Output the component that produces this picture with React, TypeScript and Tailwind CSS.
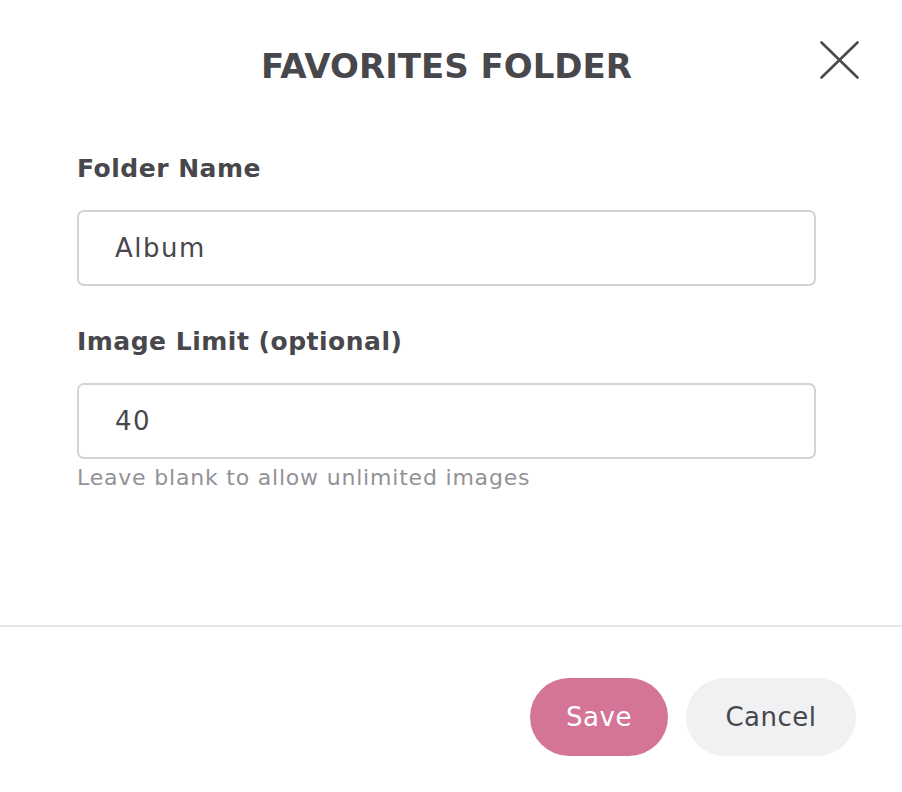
import { useState } from "react";

const font = "font-['DejaVu_Sans',sans-serif]";

const Field = ({
  label,
  value,
  onChange,
  hint,
}: {
  label: string;
  value: string;
  onChange: (v: string) => void;
  hint?: string;
}) => (
  <div className="flex flex-col">
    <label className="text-[25px] leading-[30px] font-bold text-[#47474c] tracking-[0.5px]">{label}</label>
    <input
      value={value}
      onChange={(e) => onChange(e.target.value)}
      className="mt-[26px] h-[76px] w-[739px] rounded-[7px] border-2 border-[#d4d4d6] px-[36px] text-[26px] tracking-[1.5px] text-[#47474c] outline-none"
    />
    {hint && <p className="mt-[6px] text-[22px] leading-[26px] tracking-[0.8px] text-[#929296]">{hint}</p>}
  </div>
);

export default function App() {
  const [name, setName] = useState("Album");
  const [limit, setLimit] = useState("40");

  return (
    <div className={`w-[902px] h-[792px] bg-white flex flex-col ${font}`}>
      {/* header */}
      <div className="grid grid-cols-[1fr_auto_1fr] items-start pt-[41px] pl-[34px] pr-[43px]">
        <div />
        <h1 className="pt-[5px] text-[34px] leading-[40px] font-extrabold text-[#47474c]">FAVORITES FOLDER</h1>
        <div className="flex justify-end">
          <button className="w-[39px] h-[38px] text-[#4a4a4f]">
            <svg viewBox="0 0 39 38" className="w-[39px] h-[38px]" fill="none" stroke="currentColor" strokeWidth="2.6" strokeLinecap="round">
              <path d="M1.5 1.5 L37.5 36.5 M37.5 1.5 L1.5 36.5" />
            </svg>
          </button>
        </div>
      </div>

      {/* body */}
      <div className="flex flex-col gap-[41px] pl-[77px] pt-[68px]">
        <Field label="Folder Name" value={name} onChange={setName} />
        <Field label="Image Limit (optional)" value={limit} onChange={setLimit} hint="Leave blank to allow unlimited images" />
      </div>

      <div className="flex-1" />

      {/* footer */}
      <div className="border-t-2 border-[#e6e6e8] flex justify-end gap-[18px] pt-[51px] pb-[36px] pr-[46px]">
        <button className="h-[78px] w-[138px] rounded-full bg-[#d47598] text-white text-[26px] tracking-[0.5px]">Save</button>
        <button className="h-[78px] w-[170px] rounded-full bg-[#f0f1f3] text-[#47474c] text-[26px] tracking-[0.5px]">Cancel</button>
      </div>
    </div>
  );
}
